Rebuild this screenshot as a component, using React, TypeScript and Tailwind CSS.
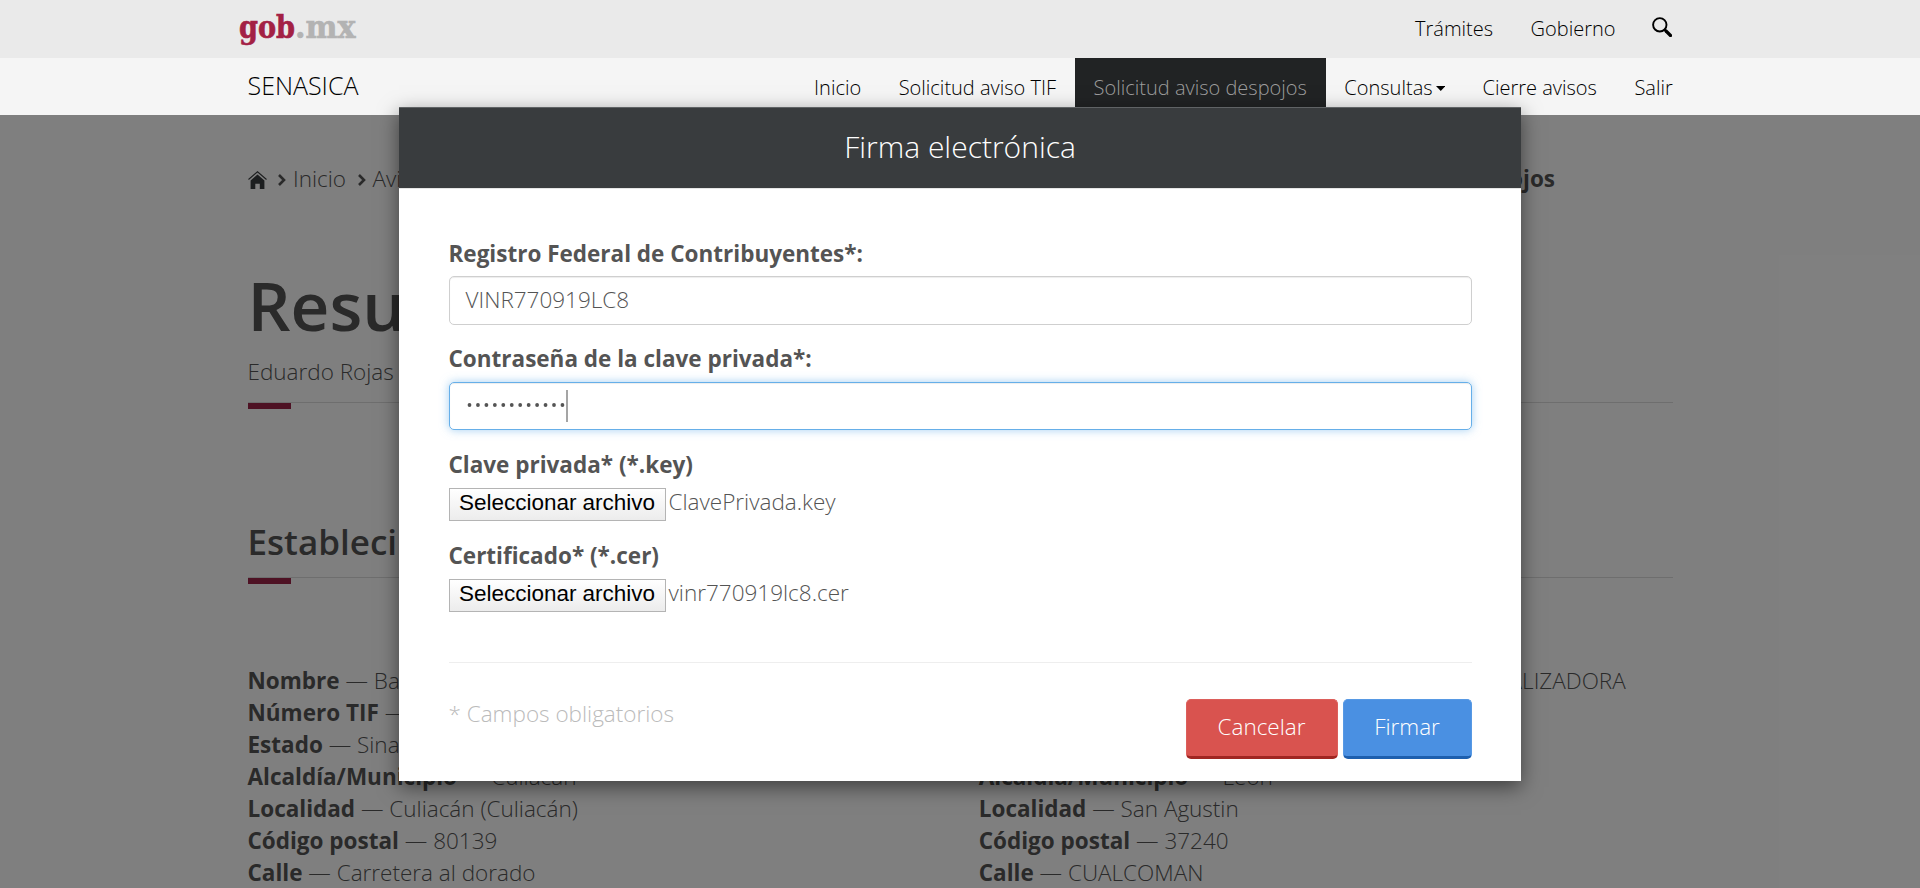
import type { ReactNode } from 'react';

const leftDetails = [
  ['Nombre', 'Bachoco Culiacán'],
  ['Número TIF', '101'],
  ['Estado', 'Sinaloa'],
  ['Alcaldía/Municipio', 'Culiacán'],
  ['Localidad', 'Culiacán (Culiacán)'],
  ['Código postal', '80139'],
  ['Calle', 'Carretera al dorado'],
];

const rightDetails = [
  ['Número TIF', '202'],
  ['Estado', 'Guanajuato'],
  ['Alcaldía/Municipio', 'León'],
  ['Localidad', 'San Agustin'],
  ['Código postal', '37240'],
  ['Calle', 'CUALCOMAN'],
];

function Detail({ name, value }: { name: string; value: string }) {
  return (
    <li className="h-8 whitespace-nowrap">
      <strong className="font-bold">{name}</strong> — {value}
    </li>
  );
}

function Rule() {
  return (
    <div className="h-[7px] border-t border-[#dddddd]">
      <div className="h-[6px] w-[43px] bg-[#9d2449]" />
    </div>
  );
}

function Chevron() {
  return (
    <svg className="h-3 w-2" viewBox="0 0 8 12" fill="none" stroke="currentColor" strokeWidth="2.6">
      <path d="M1 1l5 5-5 5" />
    </svg>
  );
}

function NavItem({ children, active = false }: { children: ReactNode; active?: boolean }) {
  return (
    <a
      className={
        active
          ? 'flex items-center bg-[#212324] px-[18.75px] text-[#9d9d9d]'
          : 'flex items-center px-[18.75px] text-black'
      }
    >
      {children}
    </a>
  );
}

function Label({ children }: { children: ReactNode }) {
  return <div className="h-8 pt-px font-bold">{children}</div>;
}

function FileField({ file }: { file: string }) {
  return (
    <div className="mt-2 flex h-[33px]">
      <button className="h-[33px] w-[217px] border border-[#b4b4b4] bg-linear-to-b from-white to-[#ececec] pb-[5px] font-['Liberation_Sans',sans-serif] text-[22.5px] leading-[27px] tracking-[-0.02px] text-black">
        Seleccionar archivo
      </button>
      <span className="-mt-[2px] ml-[3px]">{file}</span>
    </div>
  );
}

export default function App() {
  return (
    <div className="relative h-[888px] w-[1920px] overflow-hidden bg-white font-['Open_Sans',sans-serif] text-[22.5px] leading-8 font-light text-[#545454]">
      <header className="relative z-10 text-xl text-black">
        <div className="flex h-[58px] justify-between bg-[#eaeaea] pr-[229px] pl-[239px]">
          <svg className="h-[58px] w-[120px]" viewBox="0 0 120 58">
            <g fontFamily="'DejaVu Serif Condensed','DejaVu Serif',serif" fontWeight="bold" fontSize="32" strokeWidth="0.6">
              <text x="0" y="38" fill="#a32144" stroke="#a32144" textLength="56" lengthAdjust="spacingAndGlyphs">gob</text>
              <text x="56" y="38" fill="#b3b3b3" stroke="#b3b3b3" textLength="60.5" lengthAdjust="spacingAndGlyphs">.mx</text>
            </g>
          </svg>
          <nav className="flex">
            <NavItem>Trámites</NavItem>
            <NavItem>Gobierno</NavItem>
            <a className="flex pt-[17px] pr-[18.75px] pl-[18px]">
              <svg className="h-5 w-5" viewBox="0 0 20 20" fill="none" stroke="#000">
                <circle cx="7.8" cy="7.8" r="6.7" strokeWidth="1.9" />
                <path d="M12.6 12.6l1.6 1.6" strokeWidth="2.2" />
                <path d="M14 14l4.5 4.5" strokeWidth="3.2" strokeLinecap="round" />
              </svg>
            </a>
          </nav>
        </div>
        <div className="flex h-[57px] justify-between bg-[#f5f5f5] pr-[228.5px] pl-[247.5px]">
          <div className="pt-[10.5px] text-[25px] leading-8">SENASICA</div>
          <nav className="flex">
            <NavItem><span className="pt-[2px]">Inicio</span></NavItem>
            <NavItem><span className="pt-[2px]">Solicitud aviso TIF</span></NavItem>
            <NavItem active><span className="pt-[2px]">Solicitud aviso despojos</span></NavItem>
            <NavItem>
              <span className="pt-[2px]">Consultas</span>
              <svg className="mt-[3px] ml-[3px] h-[5px] w-[9.5px]" viewBox="0 0 10 5" preserveAspectRatio="none">
                <path d="M0 0h10L5 5z" />
              </svg>
            </NavItem>
            <NavItem><span className="pt-[2px]">Cierre avisos</span></NavItem>
            <NavItem><span className="pt-[2px]">Salir</span></NavItem>
          </nav>
        </div>
      </header>

      <main className="ml-[247.5px] w-[1425px]">
        <div className="flex h-[80px] items-end justify-between">
          <div className="flex items-center">
            <svg className="mt-px h-[18px] w-[19px]" viewBox="0 0 19 18">
              <path d="M0.5 8.5L9.5 0.8l9 7.7" fill="none" stroke="#393c3e" strokeWidth="1.1" />
              <path d="M2.6 9.4L9.5 3.4l6.9 6V18h-4.6v-5.2H7.3V18H2.6z" fill="#393c3e" />
            </svg>
            <span className="ml-[11px] pt-[2px]"><Chevron /></span>
            <span className="ml-[7.5px]">Inicio</span>
            <span className="ml-[11.5px] pt-[2px]"><Chevron /></span>
            <span className="ml-[7px]">Avisos</span>
          </div>
          <strong className="pr-[117.5px] font-bold">Solicitud aviso despojos</strong>
        </div>
        <h1 className="mt-[70px] h-[80px] text-[67.5px] leading-[80px] font-semibold">Resumen</h1>
        <div className="mt-[11px] h-[46px]">Eduardo Rojas</div>
        <Rule />
        <h2 className="mt-[113px] h-[55px] text-[35px] leading-[40px] font-semibold">Establecimiento</h2>
        <Rule />
        <div className="mt-[81px] grid grid-cols-[731.25px_1fr]">
          <ul>
            {leftDetails.map(([name, value]) => <Detail key={name} name={name} value={value} />)}
          </ul>
          <ul>
            <li className="flex h-8 w-[647px] justify-between">
              <span><strong className="font-bold">Nombre</strong> —</span>
              <span>COMERCIALIZADORA</span>
            </li>
            {rightDetails.map(([name, value]) => <Detail key={name} name={name} value={value} />)}
          </ul>
        </div>
      </main>

      <div className="absolute inset-0 bg-black/50" />

      <div className="absolute inset-0 z-20 flex items-start justify-center pt-[107px]">
        <section className="h-[674px] w-[1122px] bg-white shadow-[0_6px_19px_rgba(0,0,0,0.5)]">
          <div className="h-[82px] border-t border-b border-t-[#606365] border-b-[#e5e5e5] bg-[#393c3e] pt-[18px] text-center text-[30px] leading-[41px] text-white">
            Firma electrónica
          </div>
          <div className="pt-12 pr-[49.5px] pl-[49.5px]">
            <Label>Registro Federal de Contribuyentes*:</Label>
            <div className="mt-[7px] h-[49px] rounded-[5px] border border-[#cfcfcf] px-4 pt-[7px] shadow-[inset_0_1px_1px_rgba(0,0,0,0.075)]">
              VINR770919LC8
            </div>
            <div className="mt-[17px]">
              <Label>Contraseña de la clave privada*:</Label>
            </div>
            <div className="mt-2 flex h-12 rounded-[5px] border border-[#66afe9] pt-[7px] pl-[16px] shadow-[inset_0_1px_1px_rgba(0,0,0,0.075),0_0_10px_rgba(102,175,233,0.6)]">
              <svg className="h-8 w-[100px]" viewBox="0 0 100 32" fill="#545454">
                {Array.from({ length: 12 }, (_, i) => (
                  <circle key={i} cx={3.5 + i * 8.45} cy="15" r="1.9" />
                ))}
              </svg>
              <span className="h-8 w-[2px] bg-[#a5a5a5]" />
            </div>
            <div className="mt-[18px]">
              <Label>Clave privada* (*.key)</Label>
            </div>
            <FileField file="ClavePrivada.key" />
            <div className="mt-[18px]">
              <Label>Certificado* (*.cer)</Label>
            </div>
            <FileField file="vinr770919lc8.cer" />
            <div className="mt-[50px] h-px bg-[#eeeeee]" />
            <div className="mt-9 flex">
              <span className="-mt-px mr-auto text-[#bbbbbb]">* Campos obligatorios</span>
              <button className="h-[60px] w-[152px] rounded-[5px] border border-b-3 border-[#dc5f5b] border-b-[#a02622] bg-[#d9534f] pb-[3px] text-white">
                Cancelar
              </button>
              <button className="ml-[5px] h-[60px] w-[129px] rounded-[5px] border border-b-3 border-[#5799e4] border-b-[#1d5fae] bg-[#4a90e2] pb-[3px] text-white">
                Firmar
              </button>
            </div>
          </div>
        </section>
      </div>
    </div>
  );
}
